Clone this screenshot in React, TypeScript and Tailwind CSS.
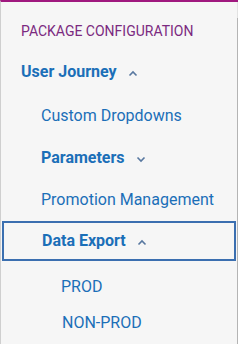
import React from "react";

const Chevron = ({ up }: { up?: boolean }) => (
  <svg width="10" height="7" viewBox="0 0 10 7" className="ml-[11px] mt-[2px]">
    <path
      d={up ? "M1.5 5.5 L5 2 L8.5 5.5" : "M1.5 1.5 L5 5 L8.5 1.5"}
      fill="none"
      stroke="#5878a0"
      strokeWidth="1.6"
    />
  </svg>
);

export default function App() {
  return (
    <div
      className="relative w-[238px] h-[344px] bg-[#f6f6f6] border-t-[2px] border-t-[#a0197f] border-l border-l-[#cfcfcf] overflow-hidden"
      style={{ fontFamily: "Roboto, 'Liberation Sans', sans-serif" }}
    >
      <div className="absolute right-0 top-0 w-px h-[16px] bg-[#e2e2e2]" />
      <div className="absolute right-0 top-[16px] bottom-0 w-px bg-[#b4b4b4]" />
      <div className="flex flex-col">
        <div className="pl-[20px] pt-[20px] h-[42px] text-[14px] text-[#7b2a80] leading-[18px]">
          PACKAGE CONFIGURATION
        </div>
        <div className="pl-[20px] h-[44px] flex items-center text-[16px] font-bold text-[#1b6fb8] mt-[6px]">
          User Journey
          <Chevron up />
        </div>
        <div className="pl-[40px] h-[44px] flex items-center text-[16px] text-[#1b6fb8]">
          Custom Dropdowns
        </div>
        <div className="pl-[40px] h-[40px] flex items-center text-[16px] font-bold text-[#1b6fb8]">
          Parameters
          <Chevron />
        </div>
        <div className="pl-[40px] h-[43px] flex items-center text-[16px] text-[#1b6fb8]">
          Promotion Management
        </div>
        <div className="pl-[38px] h-[40px] flex items-center text-[16px] font-bold text-[#1b6fb8] border-2 border-[#3b6fb0] ml-[1px] mr-[2px]">
          Data Export
          <Chevron up />
        </div>
        <div className="pl-[60px] h-[40px] mt-[6px] flex items-center text-[16px] text-[#1b6fb8]">
          PROD
        </div>
        <div className="pl-[61px] h-[32px] flex items-center text-[16px] text-[#1b6fb8]">
          NON-PROD
        </div>
      </div>
    </div>
  );
}
